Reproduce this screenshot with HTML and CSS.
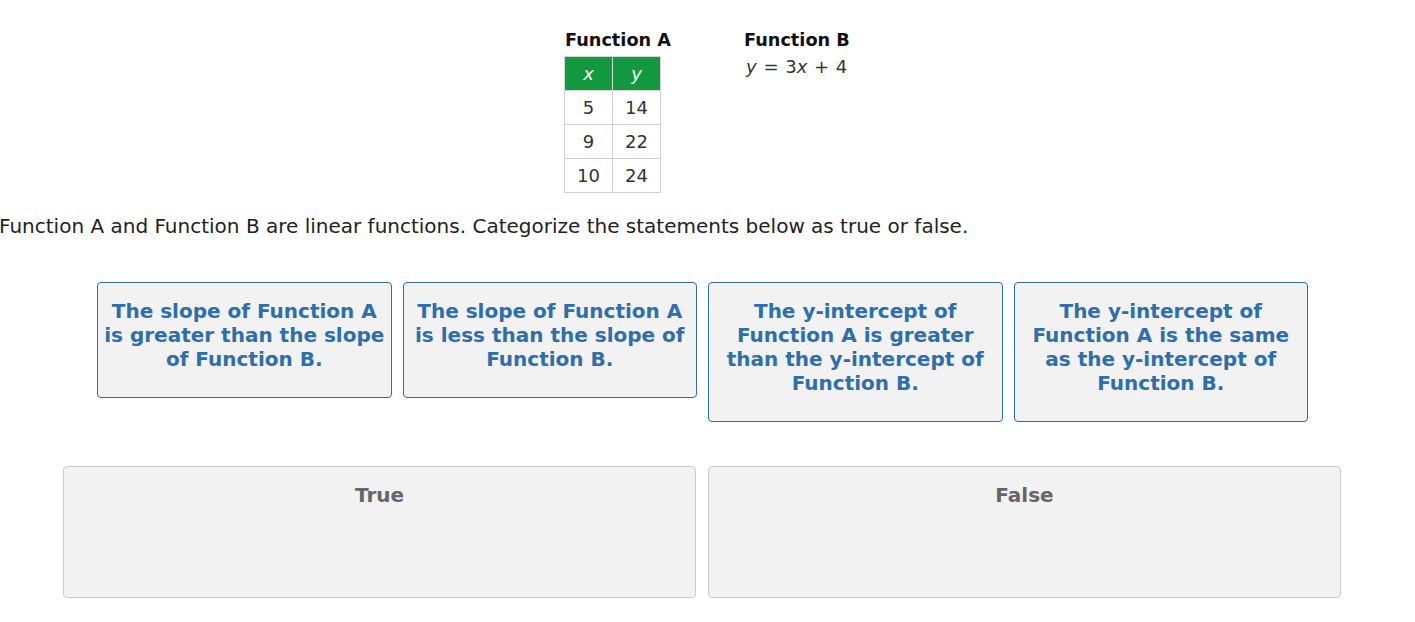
FILE: index.html
```html
<!DOCTYPE html>
<html>
<head>
<meta charset="utf-8">
<link rel="stylesheet" href="styles.css">
</head>
<body>
<div class="page">
  <div class="functions">
    <div class="fa">
      <div class="ftitle">Function A</div>
      <table class="tbl">
        <thead><tr><th>x</th><th>y</th></tr></thead>
        <tbody>
          <tr><td>5</td><td>14</td></tr>
          <tr><td>9</td><td>22</td></tr>
          <tr><td>10</td><td>24</td></tr>
        </tbody>
      </table>
    </div>
    <div class="fb">
      <div class="ftitle">Function B</div>
      <div class="eq"><i>y</i> = 3<i>x</i> + 4</div>
    </div>
  </div>
  <p class="prompt">Function A and Function B are linear functions. Categorize the statements below as true or false.</p>
  <div class="cards">
    <div class="card">The slope of Function A is greater than the slope of Function B.</div>
    <div class="card">The slope of Function A is less than the slope of Function B.</div>
    <div class="card">The y-intercept of Function A is greater than the y-intercept of Function B.</div>
    <div class="card">The y-intercept of Function A is the same as the y-intercept of Function B.</div>
  </div>
  <div class="bins">
    <div class="bin"><div class="bin-title">True</div></div>
    <div class="bin"><div class="bin-title">False</div></div>
  </div>
</div>
</body>
</html>
```
FILE: styles.css
```css
html, body {
  margin: 0;
  padding: 0;
  background: #ffffff;
}
body {
  font-family: "DejaVu Sans", Verdana, sans-serif;
  color: #222222;
}
.page {
  padding-top: 30px;
}
.functions {
  display: flex;
  margin-left: 564px;
  gap: 73px;
}
.fa {
  width: 107px;
}
.ftitle {
  font-weight: bold;
  font-size: 17.7px;
  line-height: 20px;
  color: #111111;
  margin-bottom: 6px;
  white-space: nowrap;
}
.fa .ftitle { margin-left: 1px; }
.tbl {
  border-collapse: collapse;
  font-size: 18px;
}
.tbl th, .tbl td {
  width: 47px;
  height: 33px;
  padding: 0;
  text-align: center;
  border: 1px solid #cfcfcf;
  color: #333333;
}
.tbl th {
  background: #12983f;
  color: #ffffff;
  font-weight: normal;
  font-style: italic;
  border-color: #d8d8d8;
}
.eq {
  font-size: 18px;
  line-height: 22px;
  color: #333333;
  margin-left: 2px;
  word-spacing: 1px;
}
.prompt {
  margin: 21px 0 0 -1px;
  font-size: 20px;
  line-height: 24px;
  color: #222222;
  white-space: nowrap;
}
.cards {
  display: flex;
  align-items: flex-start;
  gap: 11px;
  margin: 44px 0 0 97px;
}
.card {
  box-sizing: border-box;
  width: 294.5px;
  padding: 16px 5px 26px;
  border: 1px solid #2f6ea8;
  border-radius: 4px;
  background: #f2f2f3;
  color: #2d6ead;
  font-weight: bold;
  font-size: 20px;
  line-height: 24px;
  text-align: center;
}
.bins {
  display: flex;
  gap: 12px;
  margin: 44px 0 0 63px;
}
.bin {
  box-sizing: border-box;
  width: 633px;
  height: 132px;
  border: 1px solid #cccccc;
  border-radius: 4px;
  background: #f2f2f2;
  padding-top: 16px;
}
.bin-title {
  text-align: center;
  font-weight: bold;
  font-size: 20px;
  line-height: 24px;
  color: #666666;
}
```
